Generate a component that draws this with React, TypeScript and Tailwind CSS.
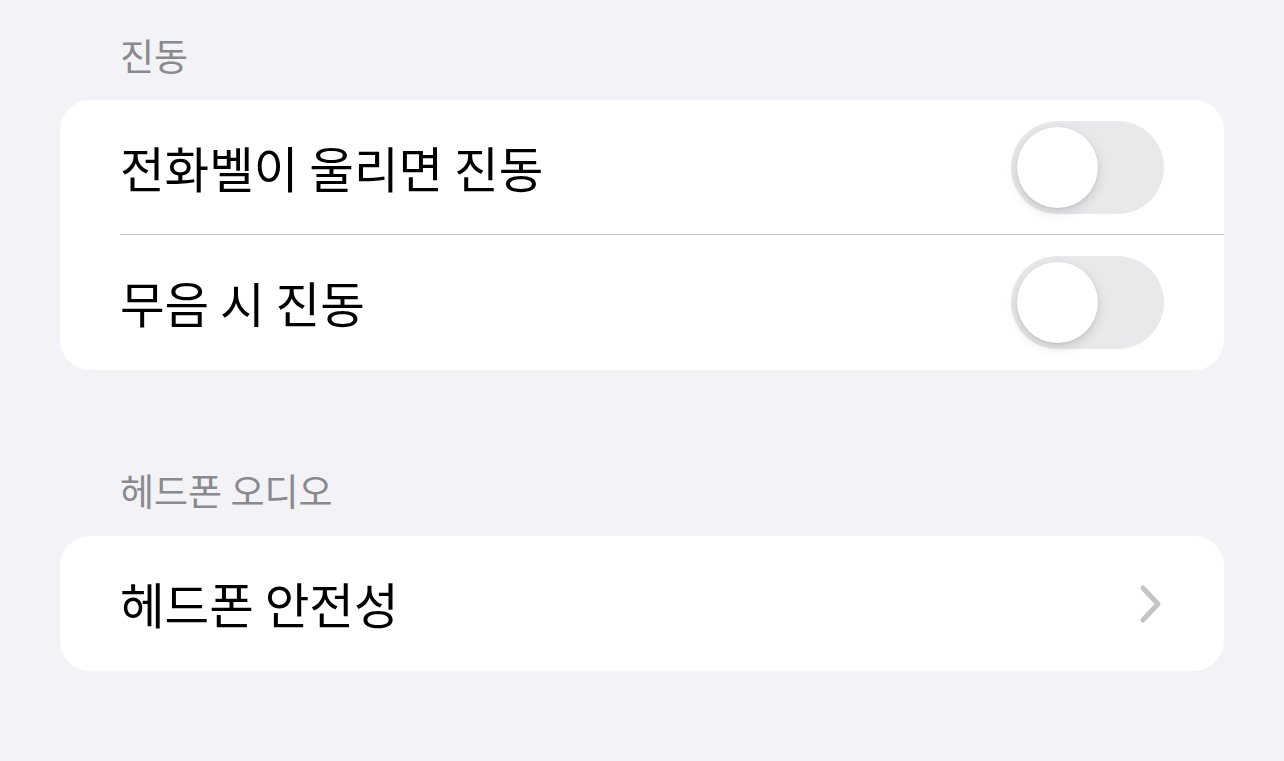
const FONT = "font-['Noto_Sans_CJK_KR','Noto_Sans',sans-serif]";

function Toggle() {
  return (
    <div className="relative h-[93px] w-[153px] shrink-0 rounded-full bg-[#e9e9eb]">
      <div className="absolute left-[6px] top-[6px] h-[81px] w-[81px] rounded-full bg-white shadow-[0_4px_12px_rgba(0,0,0,0.15),0_1px_2px_rgba(0,0,0,0.08)]" />
    </div>
  );
}

function Chevron() {
  return (
    <svg width="26" height="40" viewBox="0 0 26 40" className="shrink-0">
      <path d="M5 4 L20 20 L5 36" fill="none" stroke="#c4c4c7" strokeWidth="5" strokeLinecap="round" strokeLinejoin="round" />
    </svg>
  );
}

function Row({ label, right, divider }: { label: string; right: React.ReactNode; divider?: boolean }) {
  return (
    <div className="pl-[60px]">
      <div className={`flex h-[135px] items-center justify-between pr-[60px] ${divider ? 'border-b border-[#c6c6c8]' : ''}`}>
        <span className="text-[48.5px] leading-none text-black">{label}</span>
        {right}
      </div>
    </div>
  );
}

function SectionHeader({ title, className }: { title: string; className?: string }) {
  return (
    <div className={`flex items-center pl-[60px] text-[37px] leading-none text-[#8a8a8e] ${className ?? ''}`}>
      {title}
    </div>
  );
}

export default function App() {
  return (
    <div className={`min-h-[761px] w-full bg-[#f2f2f7] px-[60px] ${FONT}`}>
      <SectionHeader title="진동" className="h-[100px] pt-[10px]" />
      <div className="overflow-hidden rounded-[30px] bg-white">
        <Row label="전화벨이 울리면 진동" right={<Toggle />} divider />
        <Row label="무음 시 진동" right={<Toggle />} />
      </div>
      <SectionHeader title="헤드폰 오디오" className="mt-[70px] h-[96px] pt-[4px]" />
      <div className="overflow-hidden rounded-[30px] bg-white">
        <Row label="헤드폰 안전성" right={<Chevron />} />
      </div>
    </div>
  );
}
